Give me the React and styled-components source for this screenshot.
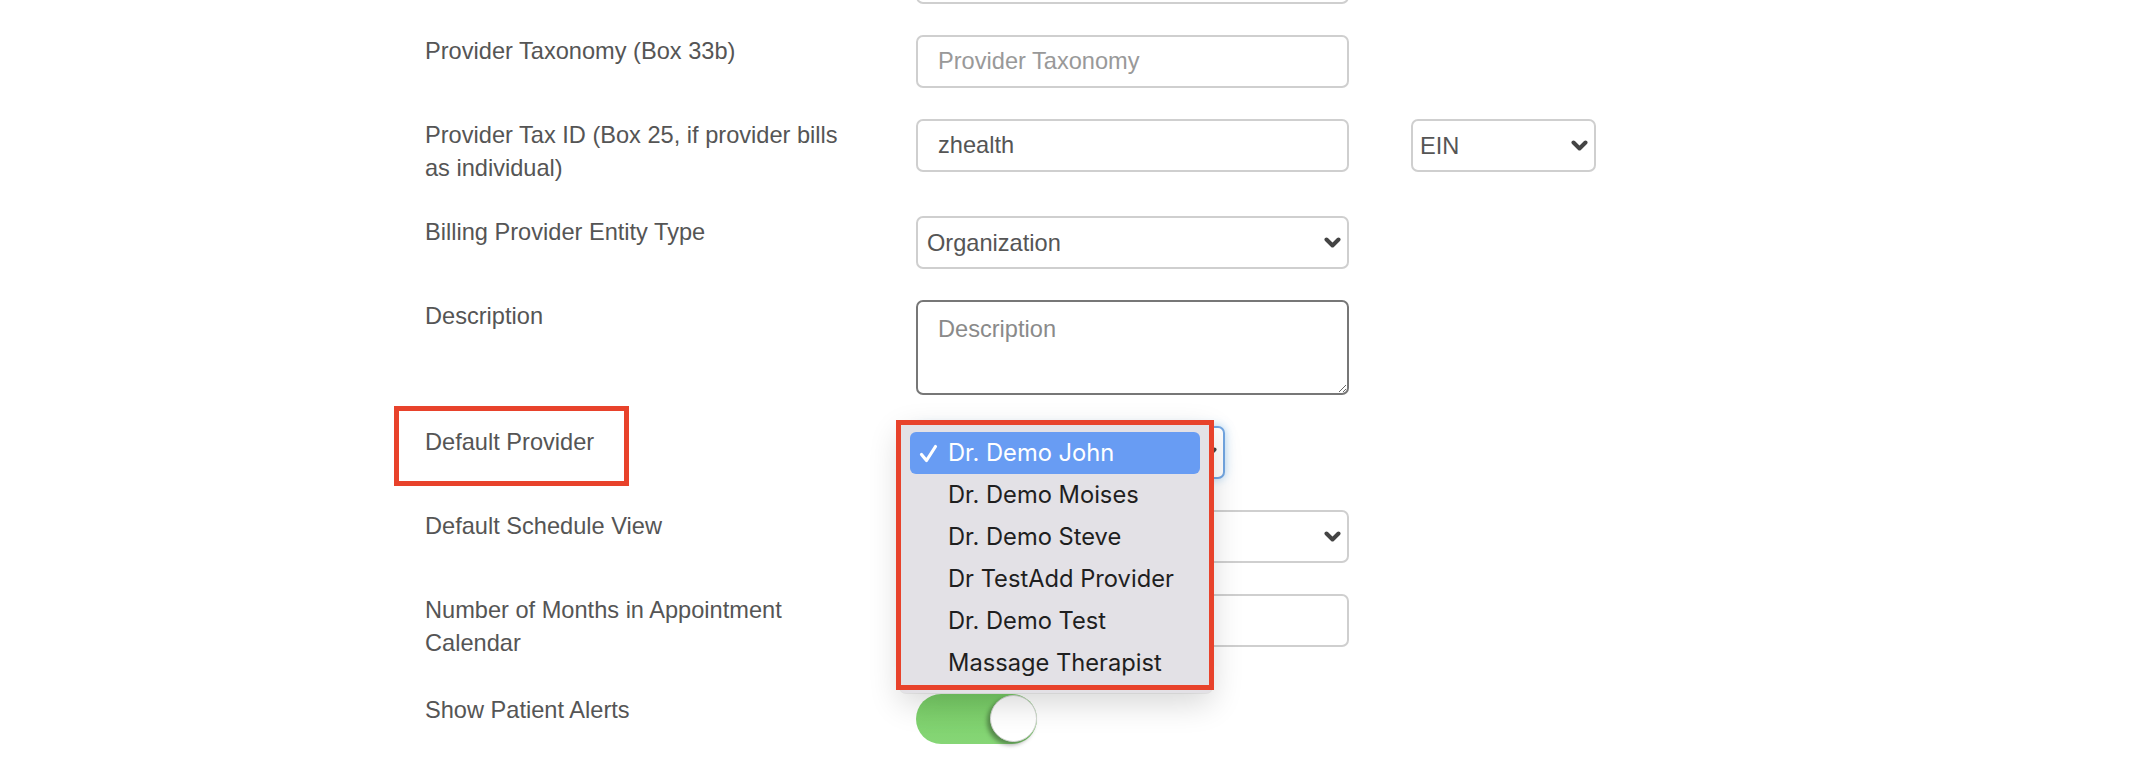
import React from "react";
import styled, { createGlobalStyle } from "styled-components";

const GlobalStyle = createGlobalStyle`
  html, body {
    margin: 0;
    padding: 0;
    background: #fff;
    overflow: hidden;
  }
  body {
    font-family: "Liberation Sans", Arial, sans-serif;
    color: #555;
  }
`;

const Page = styled.div`
  padding-left: 425px;
  margin-top: -49px;
`;

const Row = styled.div`
  display: grid;
  grid-template-columns: 491px 433px auto;
  align-items: start;
  margin-bottom: ${(p) => p.gap || 31}px;
`;

const Label = styled.div`
  position: relative;
  padding-right: 51px;
  font-size: 23.6px;
  line-height: 33px;
  color: #555;
`;

const Field = styled.div`
  position: relative;
`;

const Side = styled.div`
  padding-left: 62px;
`;

const Input = styled.input`
  box-sizing: border-box;
  display: block;
  width: 100%;
  height: 53px;
  border: 2px solid #cfcfcf;
  border-radius: 7px;
  padding: 0 20px;
  font-family: inherit;
  font-size: 23.6px;
  color: #555;
  background: #fff;
  outline: none;
  &::placeholder {
    color: #999;
  }
`;

const TextArea = styled.textarea`
  box-sizing: border-box;
  display: block;
  width: 100%;
  height: 95px;
  border: 2px solid #777;
  border-radius: 7px;
  padding: 10px 20px;
  font-family: inherit;
  font-size: 23.6px;
  line-height: 34px;
  color: #555;
  resize: vertical;
  outline: none;
  &::placeholder {
    color: #8a8a8a;
  }
`;

const SelectWrap = styled.div`
  position: relative;
  width: ${(p) => p.width || "100%"};
`;

const Select = styled.select`
  box-sizing: border-box;
  display: block;
  width: 100%;
  height: 53px;
  appearance: none;
  -webkit-appearance: none;
  border: 2px solid ${(p) => (p.focused ? "#72a6e2" : "#cfcfcf")};
  border-radius: 7px;
  padding: 0 34px 0 ${(p) => p.pad || 9}px;
  font-family: inherit;
  font-size: 23.6px;
  color: #555;
  background: #fff;
  outline: none;
  box-shadow: ${(p) =>
    p.focused ? "0 0 10px rgba(102, 175, 233, 0.55)" : "none"};
`;

const Chevron = styled.svg`
  position: absolute;
  right: 8px;
  top: 50%;
  margin-top: -6px;
  pointer-events: none;
`;

const Mark = styled.span`
  position: absolute;
  box-sizing: border-box;
  border: 5px solid #e8422b;
  pointer-events: none;
  z-index: ${(p) => p.z || 1};
`;

const Menu = styled.ul`
  position: absolute;
  left: -16px;
  top: -3px;
  z-index: 5;
  box-sizing: border-box;
  width: 312px;
  height: 270px;
  margin: 0;
  padding: 9px 12px 10px 10px;
  list-style: none;
  background: #e3e1e6;
  border-radius: 6px;
  box-shadow: 0 10px 32px rgba(0, 0, 0, 0.16), 0 0 0 1px rgba(0, 0, 0, 0.06);
  font-family: Inter, "Noto Sans", sans-serif;
`;

const MenuItem = styled.li`
  position: relative;
  height: 41.9px;
  display: flex;
  align-items: center;
  padding-left: 38px;
  border-radius: 6px;
  font-size: 23.7px;
  color: ${(p) => (p.active ? "#fff" : "#1f1f1f")};
  background: ${(p) => (p.active ? "#689cf3" : "transparent")};
`;

const Check = styled.svg`
  position: absolute;
  left: 9px;
  top: 12px;
`;

const Toggle = styled.div`
  position: relative;
  width: 121px;
  height: 50px;
  border-radius: 25px;
  background: linear-gradient(#78cd66, #86d676);
`;

const Knob = styled.span`
  position: absolute;
  right: 0;
  top: 1px;
  width: 47px;
  height: 47px;
  box-sizing: border-box;
  border-radius: 50%;
  background: #fff;
  border: 1px solid #d6d6d6;
  box-shadow: -3px 3px 4px rgba(0, 0, 0, 0.35);
`;

function ArrowDown() {
  return (
    <Chevron width="17" height="12" viewBox="0 0 17 12">
      <path
        d="M2.5 2.5 L8.5 8.5 L14.5 2.5"
        fill="none"
        stroke="#444"
        strokeWidth="4"
        strokeLinecap="round"
        strokeLinejoin="round"
      />
    </Chevron>
  );
}

function Dropdown({ options, value, focused, width, pad }) {
  return (
    <SelectWrap width={width}>
      <Select defaultValue={value} focused={focused} pad={pad}>
        {options.map((o) => (
          <option key={o}>{o}</option>
        ))}
      </Select>
      <ArrowDown />
    </SelectWrap>
  );
}

const providers = [
  "Dr. Demo John",
  "Dr. Demo Moises",
  "Dr. Demo Steve",
  "Dr TestAdd Provider",
  "Dr. Demo Test",
  "Massage Therapist",
];

function ProviderMenu() {
  return (
    <Menu>
      {providers.map((name, i) => (
        <MenuItem key={name} active={i === 0}>
          {i === 0 && (
            <Check width="19" height="19" viewBox="0 0 19 19">
              <path
                d="M2.5 10.5 L7.5 16.5 L16.5 2.5"
                fill="none"
                stroke="#fff"
                strokeWidth="3.2"
                strokeLinecap="round"
                strokeLinejoin="round"
              />
            </Check>
          )}
          {name}
        </MenuItem>
      ))}
    </Menu>
  );
}

export default function App() {
  return (
    <>
      <GlobalStyle />
      <Page>
        <Row>
          <Label />
          <Field>
            <Input defaultValue="" />
          </Field>
        </Row>

        <Row>
          <Label>Provider Taxonomy (Box 33b)</Label>
          <Field>
            <Input placeholder="Provider Taxonomy" />
          </Field>
        </Row>

        <Row>
          <Label>Provider Tax ID (Box 25, if provider bills as individual)</Label>
          <Field>
            <Input defaultValue="zhealth" />
          </Field>
          <Side>
            <Dropdown options={["EIN", "SSN"]} value="EIN" width="185px" pad={7} />
          </Side>
        </Row>

        <Row>
          <Label>Billing Provider Entity Type</Label>
          <Field>
            <Dropdown options={["Organization", "Individual"]} value="Organization" />
          </Field>
        </Row>

        <Row>
          <Label>Description</Label>
          <Field>
            <TextArea placeholder="Description" />
          </Field>
        </Row>

        <Row>
          <Label>
            Default Provider
            <Mark style={{ left: -31, top: -20, width: 235, height: 80 }} />
          </Label>
          <Field>
            <Dropdown options={providers} value="Dr. Demo John" width="309px" focused />
            <ProviderMenu />
            <Mark z={6} style={{ left: -20, top: -6, width: 318, height: 270 }} />
          </Field>
        </Row>

        <Row>
          <Label>Default Schedule View</Label>
          <Field>
            <Dropdown options={["Day", "Week", "Month"]} value="Day" />
          </Field>
        </Row>

        <Row gap={34}>
          <Label>Number of Months in Appointment Calendar</Label>
          <Field>
            <Input defaultValue="" />
          </Field>
        </Row>

        <Row>
          <Label>Show Patient Alerts</Label>
          <Field>
            <Toggle>
              <Knob />
            </Toggle>
          </Field>
        </Row>
      </Page>
    </>
  );
}
